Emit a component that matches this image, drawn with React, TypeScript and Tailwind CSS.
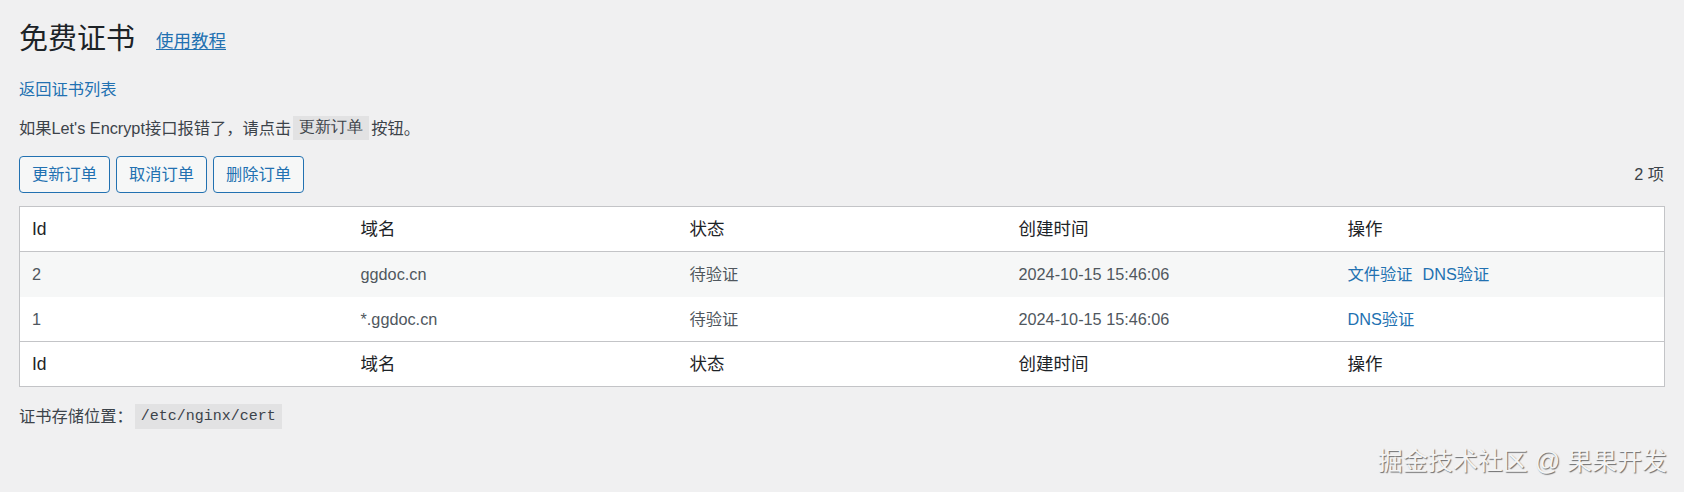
const rows = [
  { id: "2", domain: "ggdoc.cn", status: "待验证", created: "2024-10-15 15:46:06", actions: ["文件验证", "DNS验证"] },
  { id: "1", domain: "*.ggdoc.cn", status: "待验证", created: "2024-10-15 15:46:06", actions: ["DNS验证"] },
];

const columns = ["Id", "域名", "状态", "创建时间", "操作"];

function HeadRow({ last }: { last?: boolean }) {
  return (
    <tr className={last ? "border-t border-[#c3c4c7]" : "border-b border-[#c3c4c7]"}>
      {columns.map((c) => (
        <th key={c} className="h-[45px] px-[12px] text-left align-middle text-[17.5px] font-normal text-[#1d2327]">
          {c}
        </th>
      ))}
    </tr>
  );
}

export default function App() {
  return (
    <div
      className="relative min-h-[492px] w-full bg-[#f0f0f1] px-[19px] pt-[19px] text-[16.25px] text-[#3c434a]"
      style={{ fontFamily: '"Liberation Sans", "Noto Sans CJK SC", sans-serif' }}
    >
      <div className="flex items-center gap-[21px]">
        <h1 className="text-[29px] leading-[40px] font-normal text-[#1d2327]">免费证书</h1>
        <a href="#" className="mt-[4px] text-[17.5px] text-[#2271b1] underline underline-offset-2">
          使用教程
        </a>
      </div>

      <div className="mt-[20px] leading-[20px]">
        <a href="#" className="text-[#2271b1]">返回证书列表</a>
      </div>

      <p className="mt-[17px] flex items-center leading-[24px]">
        如果Let's Encrypt接口报错了，请点击
        <code className="mx-[2px] bg-[#e2e2e3] px-[6px] leading-[24px]">更新订单</code>
        按钮。
      </p>

      <div className="mt-[16px] flex items-center justify-between">
        <div className="flex gap-[6px]">
          {["更新订单", "取消订单", "删除订单"].map((b) => (
            <button
              key={b}
              className="h-[37px] rounded-[4px] border border-[#2271b1] bg-[#f6f7f7] px-[12px] text-[16.25px] text-[#2271b1]"
            >
              {b}
            </button>
          ))}
        </div>
        <span className="pr-[1px]">2 项</span>
      </div>

      <table className="mt-[13px] w-full table-fixed border-collapse border border-[#c3c4c7] bg-white">
        <thead>
          <HeadRow />
        </thead>
        <tbody>
          {rows.map((r, i) => (
            <tr key={r.id} className={i % 2 === 0 ? "bg-[#f6f7f7]" : "bg-white"}>
              <td className="h-[45px] px-[12px] text-[#50575e]">{r.id}</td>
              <td className="px-[12px] text-[#50575e]">{r.domain}</td>
              <td className="px-[12px] text-[#50575e]">{r.status}</td>
              <td className="px-[12px] text-[#50575e]">{r.created}</td>
              <td className="px-[12px]">
                <div className="flex gap-[10px]">
                  {r.actions.map((a) => (
                    <a key={a} href="#" className="text-[#2271b1]">
                      {a}
                    </a>
                  ))}
                </div>
              </td>
            </tr>
          ))}
        </tbody>
        <tfoot>
          <HeadRow last />
        </tfoot>
      </table>

      <div className="mt-[17px] flex items-center">
        证书存储位置：
        <code
          className="ml-[2px] bg-[#e2e2e3] px-[6px] text-[15px] leading-[25px] text-[#3c434a]"
          style={{ fontFamily: '"Liberation Mono", monospace' }}
        >
          /etc/nginx/cert
        </code>
      </div>

      <div className="absolute right-[17px] bottom-[16px] text-[25px] leading-[30px] text-[#f4f4f4] [text-shadow:1px_1px_1px_rgba(0,0,0,0.55)]">
        掘金技术社区 @ 果果开发
      </div>
    </div>
  );
}
